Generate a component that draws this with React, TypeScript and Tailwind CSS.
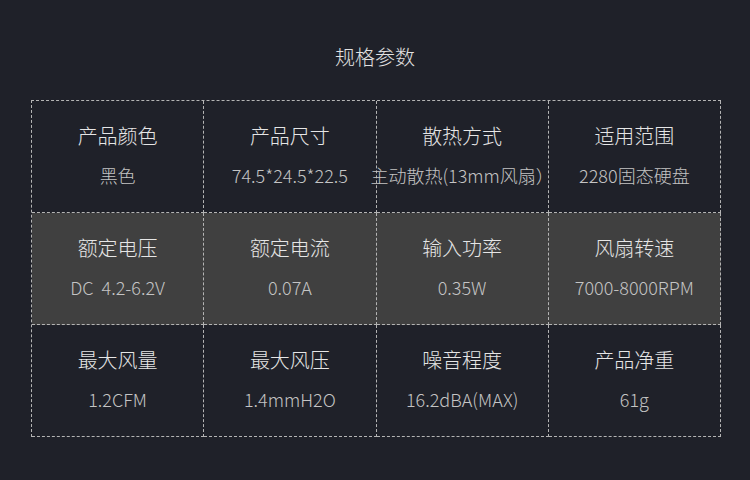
const rows = [
  {
    shaded: false,
    cells: [
      { label: "产品颜色", value: "黑色" },
      { label: "产品尺寸", value: "74.5*24.5*22.5" },
      { label: "散热方式", value: "主动散热(13mm风扇）" },
      { label: "适用范围", value: "2280固态硬盘" },
    ],
  },
  {
    shaded: true,
    cells: [
      { label: "额定电压", value: "DC  4.2-6.2V" },
      { label: "额定电流", value: "0.07A" },
      { label: "输入功率", value: "0.35W" },
      { label: "风扇转速", value: "7000-8000RPM" },
    ],
  },
  {
    shaded: false,
    cells: [
      { label: "最大风量", value: "1.2CFM" },
      { label: "最大风压", value: "1.4mmH2O" },
      { label: "噪音程度", value: "16.2dBA(MAX)" },
      { label: "产品净重", value: "61g" },
    ],
  },
];

function SpecCell({ label, value, shaded }: { label: string; value: string; shaded: boolean }) {
  return (
    <div
      className={
        "h-[112px] pb-[3px] border-r border-b border-dashed border-[#b4b4b4] flex flex-col items-center justify-center gap-[14px] " +
        (shaded ? "bg-[#404040]" : "bg-[#1f2129]")
      }
    >
      <div className="text-[20px] leading-[26px] text-[#e6e6e6] whitespace-nowrap font-light">{label}</div>
      <div className="text-[18px] leading-[24px] text-[#c4c4c4] whitespace-pre font-light">{value}</div>
    </div>
  );
}

export default function App() {
  return (
    <div
      className="w-[750px] h-[480px] bg-[#1f2129] overflow-hidden"
      style={{ fontFamily: '"Noto Sans CJK SC", "Noto Sans", sans-serif' }}
    >
      <h1 className="pt-[44px] text-center text-[20px] leading-[26px] text-[#e2e2e2] font-light">规格参数</h1>
      <div className="mt-[30px] ml-[31px] w-[690px] grid grid-cols-4 border-l border-t border-dashed border-[#b4b4b4]">
        {rows.map((row) =>
          row.cells.map((c) => (
            <SpecCell key={c.label} label={c.label} value={c.value} shaded={row.shaded} />
          ))
        )}
      </div>
    </div>
  );
}
